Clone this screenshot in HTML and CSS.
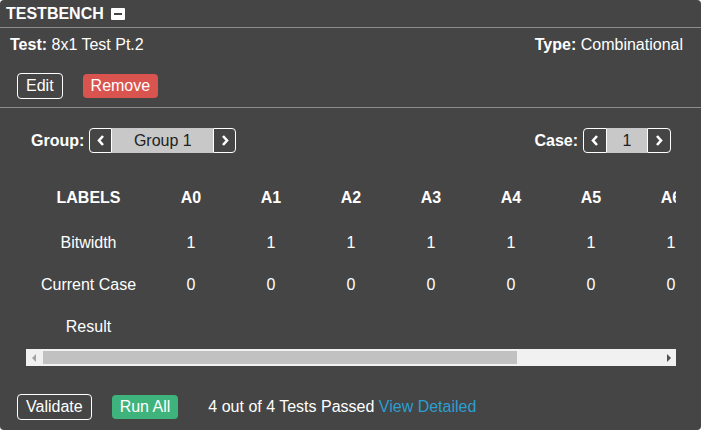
FILE: index.html
```html
<!DOCTYPE html>
<html>
<head>
<meta charset="utf-8">
<link rel="stylesheet" href="styles.css">
</head>
<body>
<div class="panel">
  <div class="header">
    <span class="title">TESTBENCH</span>
    <span class="collapse"><span class="minus"></span></span>
  </div>
  <div class="info">
    <div class="info-line">
      <div><b>Test:</b> 8x1 Test Pt.2</div>
      <div><b>Type:</b> Combinational</div>
    </div>
    <div class="actions">
      <button class="btn btn-outline">Edit</button>
      <button class="btn btn-red">Remove</button>
    </div>
  </div>
  <div class="cases">
    <div class="selectors">
      <div class="selector">
        <span class="sel-label">Group:</span>
        <div class="stepper">
          <button class="step step-left"><svg width="8" height="11" viewBox="0 0 8 11"><polyline points="6,1 2,5.5 6,10" fill="none" stroke="#fff" stroke-width="2.6"/></svg></button>
          <span class="step-value group-value">Group 1</span>
          <button class="step step-right"><svg width="8" height="11" viewBox="0 0 8 11"><polyline points="2,1 6,5.5 2,10" fill="none" stroke="#fff" stroke-width="2.6"/></svg></button>
        </div>
      </div>
      <div class="selector">
        <span class="sel-label">Case:</span>
        <div class="stepper">
          <button class="step step-left case-step"><svg width="8" height="11" viewBox="0 0 8 11"><polyline points="6,1 2,5.5 6,10" fill="none" stroke="#fff" stroke-width="2.6"/></svg></button>
          <span class="step-value case-value">1</span>
          <button class="step step-right case-step"><svg width="8" height="11" viewBox="0 0 8 11"><polyline points="2,1 6,5.5 2,10" fill="none" stroke="#fff" stroke-width="2.6"/></svg></button>
        </div>
      </div>
    </div>
    <div class="table-scroll">
      <table class="cases-table">
        <colgroup>
          <col class="col-label">
          <col><col><col><col><col><col><col><col><col>
        </colgroup>
        <tr class="head-row">
          <th>LABELS</th><th>A0</th><th>A1</th><th>A2</th><th>A3</th><th>A4</th><th>A5</th><th>A6</th><th>A7</th><th>Y</th>
        </tr>
        <tr>
          <td>Bitwidth</td><td>1</td><td>1</td><td>1</td><td>1</td><td>1</td><td>1</td><td>1</td><td>1</td><td>1</td>
        </tr>
        <tr>
          <td>Current Case</td><td>0</td><td>0</td><td>0</td><td>0</td><td>0</td><td>0</td><td>0</td><td>0</td><td>0</td>
        </tr>
        <tr>
          <td>Result</td><td></td><td></td><td></td><td></td><td></td><td></td><td></td><td></td><td></td>
        </tr>
      </table>
    </div>
    <div class="scrollbar">
      <span class="sb-btn"><span class="arrow-left"></span></span>
      <span class="thumb"></span>
      <span class="sb-fill"></span>
      <span class="sb-btn"><span class="arrow-right"></span></span>
    </div>
  </div>
  <div class="footer">
    <button class="btn btn-outline">Validate</button>
    <button class="btn btn-green">Run All</button>
    <span class="status">4 out of 4 Tests Passed <a class="link">View Detailed</a></span>
  </div>
</div>
</body>
</html>
```

FILE: styles.css
```css
body {
  margin: 0;
  background: #ffffff;
  font-family: "Liberation Sans", Arial, sans-serif;
  font-size: 16px;
  color: #ffffff;
}

.panel {
  width: 701px;
  height: 430px;
  box-sizing: border-box;
  background: #454545;
  border-radius: 4px;
  overflow: hidden;
}

.header {
  height: 27px;
  display: flex;
  align-items: center;
  gap: 7px;
  padding: 0 6px;
  border-bottom: 1px solid #8e8e8e;
}

.title {
  font-weight: bold;
}

.collapse {
  width: 14px;
  height: 12px;
  background: #ffffff;
  border-radius: 1px;
  display: flex;
  align-items: center;
  justify-content: center;
}

.minus {
  width: 8px;
  height: 2px;
  background: #454545;
}

.info {
  padding: 8px 18px 8px 10px;
  border-bottom: 1px solid #8e8e8e;
}

.info-line {
  display: flex;
  justify-content: space-between;
  line-height: 18px;
}

.actions {
  display: flex;
  align-items: center;
  gap: 20px;
  margin-top: 19px;
  padding-left: 7px;
}

.btn {
  font-family: inherit;
  font-size: 16px;
  line-height: 24px;
  padding: 0 8px;
  border: none;
  border-radius: 4px;
  color: #ffffff;
  margin: 0;
}

.btn-outline {
  background: transparent;
  border: 1px solid #ffffff;
}

.btn-red {
  background: #d9534f;
}

.btn-green {
  background: #3fb37c;
}

.cases {
  padding: 20px 25px 0 26px;
}

.selectors {
  display: flex;
  justify-content: space-between;
  padding: 0 5px;
}

.selector {
  display: flex;
  align-items: center;
  gap: 5px;
}

.sel-label {
  font-weight: bold;
}

.stepper {
  display: flex;
  height: 25px;
}

.step {
  width: 23px;
  height: 25px;
  box-sizing: border-box;
  border: 1px solid #ffffff;
  background: transparent;
  display: flex;
  align-items: center;
  justify-content: center;
  padding: 0;
  margin: 0;
}

.case-step {
  width: 24px;
}

.step-left {
  border-radius: 4px 0 0 4px;
}

.step-right {
  border-radius: 0 4px 4px 0;
}

.step-value {
  background: #c8c8c8;
  color: #222222;
  line-height: 25px;
  text-align: center;
}

.group-value {
  width: 101px;
}

.case-value {
  width: 40px;
}

.table-scroll {
  margin-top: 21px;
  width: 650px;
  overflow: hidden;
}

.cases-table {
  border-collapse: collapse;
  table-layout: fixed;
  width: 845px;
}

.cases-table col {
  width: 80px;
}

.cases-table col.col-label {
  width: 125px;
}

.cases-table th,
.cases-table td {
  padding: 0;
  text-align: center;
  height: 42px;
  white-space: nowrap;
}

.cases-table .head-row th {
  height: 48px;
  font-weight: bold;
}

.scrollbar {
  margin-top: 1px;
  height: 17px;
  width: 650px;
  background: #f1f1f1;
  display: flex;
  align-items: center;
}

.sb-btn {
  width: 15px;
  height: 17px;
  display: flex;
  align-items: center;
  justify-content: center;
}

.arrow-left {
  width: 0;
  height: 0;
  border-top: 4px solid transparent;
  border-bottom: 4px solid transparent;
  border-right: 4px solid #a3a3a3;
}

.arrow-right {
  width: 0;
  height: 0;
  border-top: 4px solid transparent;
  border-bottom: 4px solid transparent;
  border-left: 4px solid #505050;
}

.thumb {
  margin-left: 2px;
  width: 474px;
  height: 13px;
  background: #c1c1c1;
}

.sb-fill {
  flex: 1;
}

.footer {
  display: flex;
  align-items: center;
  gap: 20px;
  margin-top: 28px;
  padding-left: 17px;
}

.status {
  margin-left: 10px;
}

.link {
  color: #2a9fd0;
}
```
